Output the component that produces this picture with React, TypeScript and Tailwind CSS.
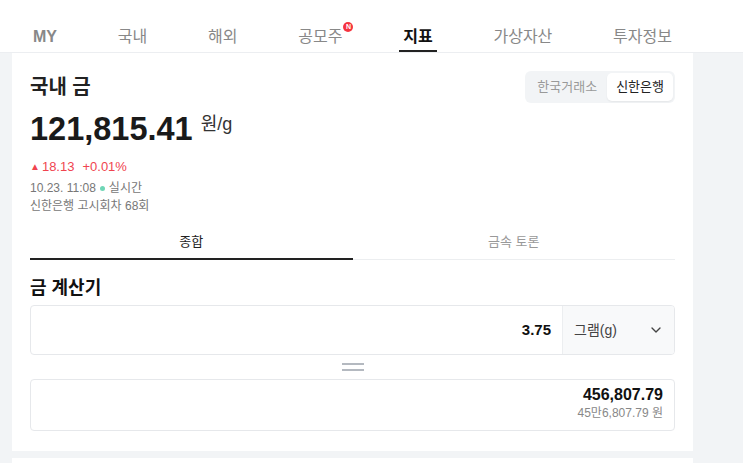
import { ChevronDown } from "lucide-react";

const tabs = ["MY", "국내", "해외", "공모주", "지표", "가상자산", "투자정보"];

function TopNav() {
  return (
    <nav className="h-[53px] bg-white border-b border-[#eceef1]">
      <div className="ml-[12px] w-[681px] h-[52px] px-[17px] flex justify-between">
        {tabs.map((t) => {
          const active = t === "지표";
          return (
            <div
              key={t}
              className={
                active
                  ? "relative h-full flex items-end px-1 pb-[3px] border-b-2 border-[#222]"
                  : "relative h-full flex items-end px-1 pb-[3px] border-b-2 border-transparent"
              }
            >
              <span
                className={
                  active
                    ? "text-[16px] leading-5 font-bold text-[#111]"
                    : t === "MY"
                    ? "text-[16px] leading-5 font-bold text-[#888]"
                    : "text-[16px] leading-5 text-[#888]"
                }
              >
                {t}
              </span>
              {t === "공모주" && (
                <span className="absolute top-[22px] -right-[7px] w-[10px] h-[10px] rounded-full bg-[#f5333f] text-white text-[7px] leading-[10px] font-bold text-center">
                  N
                </span>
              )}
            </div>
          );
        })}
      </div>
    </nav>
  );
}

export default function App() {
  return (
    <div className="w-[743px] h-[463px] overflow-hidden bg-[#f2f4f6] font-['Liberation_Sans','Noto_Sans_CJK_KR',sans-serif] text-[#222]">
      <TopNav />

      <div className="ml-[12px] w-[681px] bg-white px-[18px] pt-[20px] pb-[20px]">
        <div className="flex justify-between items-start">
          <h1 className="text-[20px] leading-7 font-bold text-[#222]">국내 금</h1>
          <div className="h-8 -mt-[2px] flex items-center rounded-md bg-[#f2f4f6] p-[2px] text-[13px]">
            <button className="h-full px-[10px] text-[#999]">한국거래소</button>
            <button className="h-full px-[9px] rounded-[5px] bg-white text-[#222] shadow-[0_1px_2px_rgba(0,0,0,0.06)]">
              신한은행
            </button>
          </div>
        </div>

        <div className="mt-[6px] flex items-start">
          <span className="text-[32.5px] leading-10 font-bold text-[#1a1a1a]">121,815.41</span>
          <span className="ml-2 mt-[3px] text-[18px] leading-6 text-[#333]">원/g</span>
        </div>

        <div className="mt-[9px] flex items-center text-[13px] leading-[18px] text-[#f0444f]">
          <span className="text-[10px] mr-[2px]">▲</span>
          <span>18.13</span>
          <span className="ml-2">+0.01%</span>
        </div>
        <div className="mt-[3px] flex items-center text-[12px] leading-[18px] text-[#777]">
          <span>10.23. 11:08</span>
          <span className="mx-[4px] w-[5px] h-[5px] rounded-full bg-[#6fd6b6]" />
          <span>실시간</span>
        </div>
        <div className="text-[12px] leading-[18px] text-[#777]">신한은행 고시회차 68회</div>

        <div className="flex border-b border-[#eceef0]">
          <div className="flex-1 pt-[17px] pb-[6px] -mb-px border-b-2 border-[#222] text-center text-[13px] leading-5 text-[#222]">
            종합
          </div>
          <div className="flex-1 pt-[17px] pb-[6px] -mb-px border-b-2 border-transparent text-center text-[13px] leading-5 text-[#999]">
            금속 토론
          </div>
        </div>

        <h2 className="mt-[15px] text-[18px] leading-[26px] font-bold text-[#111]">금 계산기</h2>

        <div className="mt-[4px] h-[50px] flex rounded border border-[#e6e8eb] overflow-hidden">
          <div className="flex-1 flex items-center justify-end pr-[11px] text-[15px] font-bold text-[#111]">
            3.75
          </div>
          <div className="w-[112px] flex items-center justify-between border-l border-[#eceef0] bg-[#f8f9fa] pl-[11px] pr-[10px]">
            <span className="text-[14px] text-[#444]">그램(g)</span>
            <ChevronDown size={16} strokeWidth={2} className="text-[#444]" />
          </div>
        </div>

        <div className="h-6 flex flex-col items-center justify-center gap-[4px]">
          <span className="w-[22px] h-[2px] bg-[#b4b9c0]" />
          <span className="w-[22px] h-[2px] bg-[#b4b9c0]" />
        </div>

        <div className="h-[52px] flex flex-col items-end pt-[5px] pr-[11px] rounded border border-[#e6e8eb]">
          <span className="text-[16px] leading-5 font-bold text-[#111]">456,807.79</span>
          <span className="text-[12px] leading-4 text-[#888]">45만6,807.79 원</span>
        </div>
      </div>

      <div className="ml-[12px] mt-[7px] w-[681px] h-[40px] bg-white" />
    </div>
  );
}
